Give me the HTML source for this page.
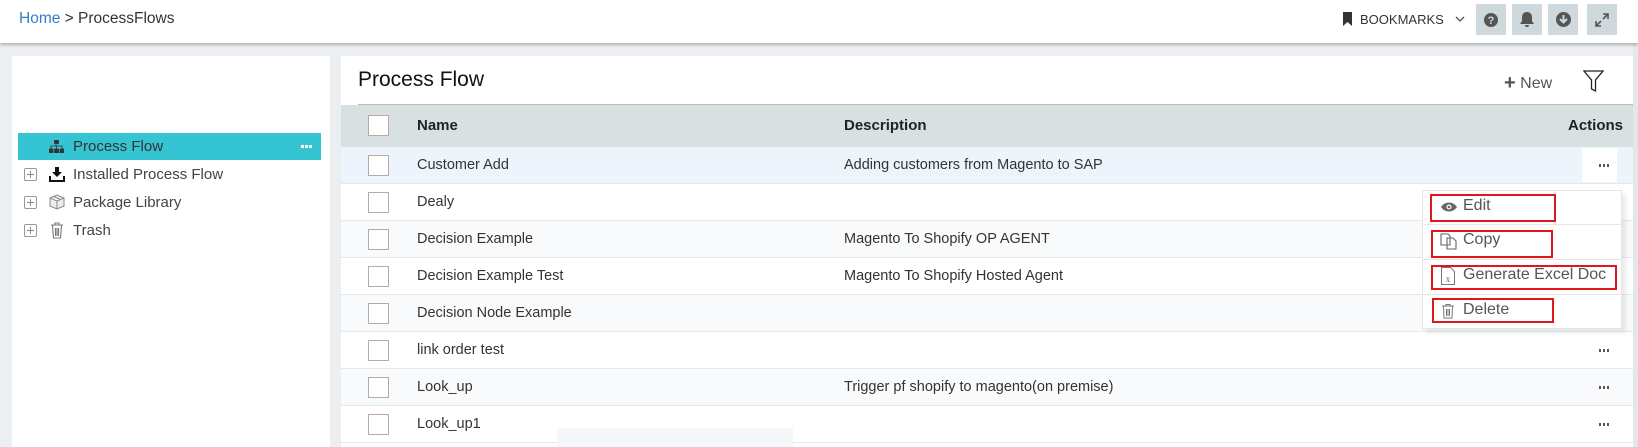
<!DOCTYPE html>
<html><head><meta charset="utf-8"><style>
*{margin:0;padding:0;box-sizing:border-box}
body{width:1638px;height:447px;overflow:hidden;background:#eceff2;font-family:"Liberation Sans",sans-serif;position:relative;color:#333}
.abs{position:absolute}
#hdr{left:0;top:0;width:1638px;height:43px;background:#fff;box-shadow:0 2px 3px rgba(0,0,0,.25);z-index:5}
.btn{position:absolute;top:4px;width:30px;height:31px;background:#cfd8dc;display:flex;align-items:center;justify-content:center}
.row{position:absolute;left:341px;width:1292px;height:37px;border-bottom:1px solid #e3e8ec;font-size:14.5px;color:#333}
.cb{position:absolute;left:27px;top:8px;width:21px;height:21px;border:1px solid #b8a8a8;background:#fff}
.nm{position:absolute;left:76px;top:10px}
.ds{position:absolute;left:503px;top:10px}
.dots{position:absolute;left:1258px;top:17px;width:10px;height:3px;background:repeating-linear-gradient(90deg,#555 0 2px,transparent 2px 4px)}
.tree{position:absolute;left:18px;width:303px;height:27px;font-size:15px;color:#444}
.pl{position:absolute;left:6px;top:7px;width:13px;height:13px;border:1px solid #999;border-radius:2px}
.pl:before{content:"";position:absolute;left:2px;top:5px;width:7px;height:1px;background:#888}
.pl:after{content:"";position:absolute;left:5px;top:2px;width:1px;height:7px;background:#888}
.mi{position:absolute;left:1422px;width:200px;height:35px;border-bottom:1px solid #e6e6e6;font-size:16px;color:#555}
.red{position:absolute;border:2px solid #e3141b}
</style></head><body>
<div id="hdr" class="abs">
 <div class="abs" style="left:19px;top:10px;font-size:15.5px;color:#333"><span style="color:#3a7bc8">Home</span> &gt; ProcessFlows</div>
 <svg class="abs" style="left:1342px;top:12px" width="11" height="14"><path d="M1 0h9v14l-4.5-4L1 14z" fill="#333"/></svg>
 <div class="abs" style="left:1360px;top:12px;font-size:13px;color:#333">BOOKMARKS</div>
 <svg class="abs" style="left:1455px;top:16px" width="10" height="6"><path d="M1 1l4 4 4-4" stroke="#555" fill="none" stroke-width="1.3"/></svg>
 <div class="btn" style="left:1476px"><svg width="14" height="14"><circle cx="7" cy="7" r="7" fill="#555"/><text x="7" y="11" font-size="11" font-weight="bold" text-anchor="middle" fill="#cfd8dc" font-family="Liberation Sans">?</text></svg></div>
 <div class="btn" style="left:1512px"><svg width="14" height="15"><path d="M7 0c-3 0-5 2-5 5v4L0 12h14l-2-3V5c0-3-2-5-5-5zM5 13h4a2 2 0 0 1-4 0z" fill="#555"/></svg></div>
 <div class="btn" style="left:1548px"><svg width="15" height="15"><circle cx="7.5" cy="7.5" r="7.5" fill="#555"/><path d="M4 7l3.5 3.5L11 7M7.5 3v7" stroke="#cfd8dc" stroke-width="2" fill="none"/></svg></div>
 <div class="btn" style="left:1587px"><svg width="14" height="14"><path d="M8 1h5v5M13 1L8 6M6 13H1V8M1 13l5-5" stroke="#555" stroke-width="1.6" fill="none"/></svg></div>
</div>
<div class="abs" style="left:1633px;top:43px;width:5px;height:404px;background:#e4e6e8"></div>
<div class="abs" style="left:12px;top:56px;width:318px;height:391px;background:#fff"></div>
<div class="tree" style="top:133px;background:#35c4d1;color:#333">
 <svg class="abs" style="left:31px;top:7px" width="15" height="13"><path d="M5.5 0h4v3.5h-4zM7 3.5v2.5M1.5 6h12M2 6v3M7.5 6v3M13 6v3M0 9h4v4H0zM5.5 9h4v4h-4zM11 9h4v4h-4z" fill="#333" stroke="#333" stroke-width=".8"/></svg>
 <span class="abs" style="left:55px;top:5px">Process Flow</span>
 <div class="abs" style="left:283px;top:12px;width:11px;height:3px;background:repeating-linear-gradient(90deg,#fff 0 3px,transparent 3px 4px)"></div>
</div>
<div class="tree" style="top:161px"><div class="pl"></div><svg class="abs" style="left:31px;top:6px" width="16" height="15"><path d="M6 0h4v5h3l-5 5-5-5h3zM0 9h2v4h12V9h2v6H0z" fill="#111"/></svg><span class="abs" style="left:55px;top:5px">Installed Process Flow</span></div>
<div class="tree" style="top:189px"><div class="pl"></div><svg class="abs" style="left:31px;top:5px" width="16" height="16"><path d="M8 1l7 3v8l-7 3-7-3V4zM1 4l7 3 7-3M8 7v8M4.5 2.5l7 3" stroke="#888" fill="#eee" stroke-width="1"/></svg><span class="abs" style="left:55px;top:5px">Package Library</span></div>
<div class="tree" style="top:217px"><div class="pl"></div><svg class="abs" style="left:32px;top:5px" width="14" height="17"><path d="M1 3h12M5 3V1h4v2M2.5 3l1 13h7l1-13M5.5 6v8M7 6v8M8.5 6v8" stroke="#777" fill="none" stroke-width="1.1"/></svg><span class="abs" style="left:55px;top:5px">Trash</span></div>
<div class="abs" style="left:341px;top:56px;width:1292px;height:391px;background:#fff"></div>
<div class="abs" style="left:358px;top:68px;font-size:21px;color:#111">Process Flow</div>
<div class="abs" style="left:1504px;top:71px;font-size:16px;color:#555"><b style="font-size:20px;color:#555;position:relative;top:1px">+</b> New</div>
<svg class="abs" style="left:1583px;top:70px" width="21" height="23"><path d="M1 1h19l-7.5 9v11l-4-2v-9z" stroke="#222" fill="none" stroke-width="1.3"/></svg>
<div class="abs" style="left:358px;top:104px;width:1275px;height:1px;background:#bbb"></div>
<div class="row" style="top:105px;height:42px;background:#d9e0e2;border:0;font-weight:bold;font-size:15px;color:#222">
 <div class="cb" style="top:10px"></div><div class="nm" style="top:12px">Name</div><div class="ds" style="top:12px">Description</div><div class="abs" style="left:1227px;top:12px">Actions</div>
</div>
<div class="row" style="top:147px;background:#edf4fc"><div class="cb"></div><div class="nm">Customer Add</div><div class="ds">Adding customers from Magento to SAP</div><div class="abs" style="left:1241px;top:1px;width:35px;height:34px;background:#fff"></div><div class="dots"></div></div>
<div class="row" style="top:184px;background:#fff"><div class="cb"></div><div class="nm">Dealy</div></div>
<div class="row" style="top:221px;background:#f9fafc"><div class="cb"></div><div class="nm">Decision Example</div><div class="ds">Magento To Shopify OP AGENT</div></div>
<div class="row" style="top:258px;background:#fff"><div class="cb"></div><div class="nm">Decision Example Test</div><div class="ds">Magento To Shopify Hosted Agent</div></div>
<div class="row" style="top:295px;background:#f9fafc"><div class="cb"></div><div class="nm">Decision Node Example</div></div>
<div class="row" style="top:332px;background:#fff"><div class="cb"></div><div class="nm">link order test</div><div class="dots"></div></div>
<div class="row" style="top:369px;background:#f9fafc"><div class="cb"></div><div class="nm">Look_up</div><div class="ds">Trigger pf shopify to magento(on premise)</div><div class="dots"></div></div>
<div class="row" style="top:406px;background:#fff"><div class="cb"></div><div class="nm">Look_up1</div><div class="dots"></div></div>
<div class="abs" style="left:557px;top:428px;width:236px;height:19px;background:#f5f8fb"></div>
<div class="abs" style="left:1422px;top:190px;width:200px;height:139px;background:#fff;border:1px solid #e6e6e6;box-shadow:4px 4px 4px rgba(0,0,0,.08)"></div>
<div class="mi" style="top:190px"><svg class="abs" style="left:19px;top:12px" width="16" height="10"><path d="M0 5c4-6 12-6 16 0-4 6-12 6-16 0z" fill="#666"/><circle cx="8" cy="5" r="2.5" fill="#fff"/><circle cx="8" cy="5" r="1.3" fill="#666"/></svg><span class="abs" style="left:41px;top:7px">Edit</span></div>
<div class="mi" style="top:225px"><svg class="abs" style="left:18px;top:8px" width="17" height="17"><path d="M1 1h7l2 2v9H1zM7 5h6l3 3v8H7z" stroke="#666" fill="#fff" stroke-width="1.1"/></svg><span class="abs" style="left:41px;top:6px">Copy</span></div>
<div class="mi" style="top:260px"><svg class="abs" style="left:19px;top:7px" width="14" height="18"><path d="M.5.5h9l4 4v13H.5z" stroke="#777" fill="none"/><text x="7" y="15" font-size="9" text-anchor="middle" fill="#666" font-family="Liberation Serif">x</text></svg><span class="abs" style="left:41px;top:6px">Generate Excel Doc</span></div>
<div class="mi" style="top:295px;border:0"><svg class="abs" style="left:20px;top:9px" width="12" height="15"><path d="M0 2h12M4 2V.5h4V2M1.5 2l.5 12h8l.5-12M4.5 5v7M6 5v7M7.5 5v7" stroke="#777" fill="none"/></svg><span class="abs" style="left:41px;top:6px">Delete</span></div>
<div class="red" style="left:1430px;top:194px;width:126px;height:28px"></div>
<div class="red" style="left:1431px;top:230px;width:122px;height:28px"></div>
<div class="red" style="left:1431px;top:265px;width:186px;height:25px"></div>
<div class="red" style="left:1432px;top:298px;width:122px;height:25px"></div>
</body></html>
